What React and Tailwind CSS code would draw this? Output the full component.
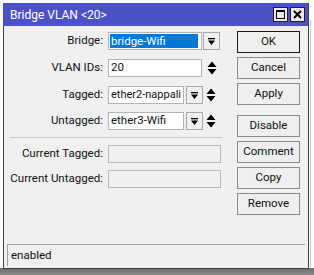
import React from "react";

const DropIcon = () => (
  <svg width="9" height="9" viewBox="0 0 9 9">
    <rect x="1" y="1" width="7" height="1.3" fill="#000" />
    <polygon points="1,3.5 8,3.5 4.5,8" fill="#000" />
  </svg>
);

const UpDown = () => (
  <div className="w-[14px] flex justify-center">
    <svg width="10" height="14" viewBox="0 0 10 14">
      <polygon points="5,0.5 9.5,6 0.5,6" fill="#000" />
      <polygon points="0.5,8 9.5,8 5,13.5" fill="#000" />
    </svg>
  </div>
);

const DropBtn = () => (
  <div className="w-[17px] h-[18px] border border-[#a8a8a8] bg-[#f0f0f0] flex items-center justify-center">
    <DropIcon />
  </div>
);

const Label = ({ children }) => (
  <div className="w-[104px] text-right pr-[5px] shrink-0 whitespace-nowrap">{children}</div>
);

const Field = ({ w, children }) => (
  <div className={`h-[18px] bg-white border border-[#b4b4b4] flex items-center px-[2px] whitespace-nowrap overflow-hidden ${w}`}>
    {children}
  </div>
);

const Btn = ({ children, def, cls = "" }) => (
  <div
    className={`h-[22px] w-[63px] flex items-center justify-center bg-[#efefef] border ${
      def ? "border-[#1a1a1a]" : "border-[#8c8c8c]"
    } ${cls}`}
  >
    {children}
  </div>
);

export default function App() {
  return (
    <div
      className="w-[314px] h-[275px] relative overflow-hidden bg-[#fbfbfb] text-[11.5px] text-[#111]"
      style={{ fontFamily: 'Roboto, "Liberation Sans", Arial, sans-serif' }}
    >
      {/* desktop background bits */}
      <div className="absolute left-0 right-0 bottom-0 h-[7px] bg-gradient-to-b from-[#6c6c6c] to-[#8a8a8a]" />
      <div className="absolute right-[3px] top-[20px] bottom-[8px] w-px bg-[#c8c8c8]" />

      {/* window */}
      <div className="absolute left-[3px] top-[3px] w-[306px] h-[266px] flex flex-col border-r border-b border-[#404040]">
        <div className="h-[23px] bg-[#4d51c7] flex items-center pl-[7px] pr-[3px] shrink-0">
          <span className="text-white text-[12px]">Bridge VLAN &lt;20&gt;</span>
          <div className="ml-auto flex gap-[2px]">
            <div className="w-[15px] h-[15px] bg-[#ececec] border border-[#202020] flex items-center justify-center">
              <div className="w-[9px] h-[9px] border border-black border-t-2" />
            </div>
            <div className="w-[15px] h-[15px] bg-[#ececec] border border-[#202020] flex items-center justify-center">
              <svg width="9" height="9" viewBox="0 0 9 9">
                <path d="M1 1 L8 8 M8 1 L1 8" stroke="#000" strokeWidth="2" />
              </svg>
            </div>
          </div>
        </div>
        <div className="flex-1 bg-[#f0f0f0] border-l border-[#404040] flex flex-col">
          <div className="flex flex-1">
            {/* form */}
            <div className="w-[230px] flex flex-col pt-[5px]">
              <div className="flex items-center h-[18px] mt-[1px]">
                <Label>Bridge:</Label>
                <Field w="w-[94px]">
                  <div className="bg-[#0078d7] text-white w-full h-[14px] leading-[14px] pl-[1px] -mx-[1px]">bridge-Wifi</div>
                </Field>
                <div className="ml-[1px]"><DropBtn /></div>
              </div>
              <div className="flex items-center h-[18px] mt-[9px]">
                <Label>VLAN IDs:</Label>
                <Field w="w-[94px]">20</Field>
                <div className="ml-[3px]"><UpDown /></div>
              </div>
              <div className="flex items-center h-[18px] mt-[9px]">
                <Label>Tagged:</Label>
                <Field w="w-[76px] text-[11px]">ether2-nappali</Field>
                <div className="ml-[2px]"><DropBtn /></div>
                <div className="ml-[1px]"><UpDown /></div>
              </div>
              <div className="flex items-center h-[18px] mt-[8px]">
                <Label>Untagged:</Label>
                <Field w="w-[76px]">ether3-Wifi</Field>
                <div className="ml-[2px]"><DropBtn /></div>
                <div className="ml-[1px]"><UpDown /></div>
              </div>
              <div className="h-px bg-[#c8c8c8] ml-[6px] mr-[12px] mt-[7px]" />
              <div className="flex items-center h-[18px] mt-[7px]">
                <Label>Current Tagged:</Label>
                <div className="w-[113px] h-[18px] border border-[#b9b9b9] bg-[#f0f0f0]" />
              </div>
              <div className="flex items-center h-[18px] mt-[7px]">
                <Label>Current Untagged:</Label>
                <div className="w-[113px] h-[18px] border border-[#b9b9b9] bg-[#f0f0f0]" />
              </div>
            </div>
            {/* buttons */}
            <div className="flex flex-col pt-[5px] ml-[3px] gap-[4px]">
              <Btn def>OK</Btn>
              <Btn>Cancel</Btn>
              <Btn>Apply</Btn>
              <Btn cls="mt-[6px]">Disable</Btn>
              <Btn>Comment</Btn>
              <Btn>Copy</Btn>
              <Btn>Remove</Btn>
            </div>
          </div>
          <div className="h-[22px] mx-[3px] mb-[2px] border-t border-l border-[#a0a0a0] flex items-center pl-[3px]">
            enabled
          </div>
        </div>
      </div>
    </div>
  );
}
